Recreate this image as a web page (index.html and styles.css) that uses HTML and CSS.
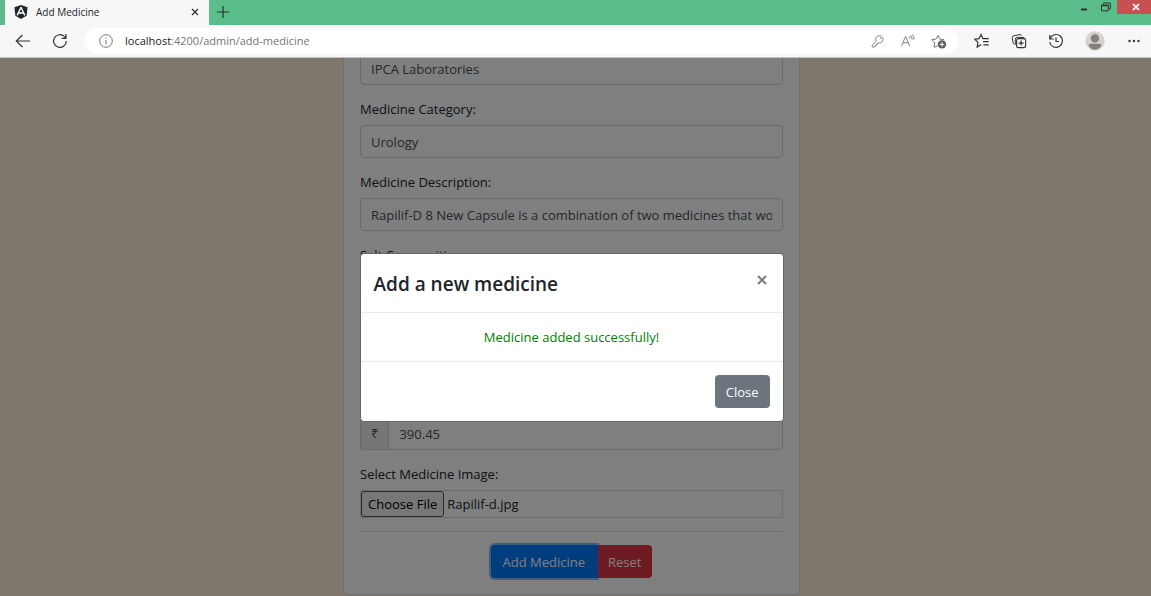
FILE: index.html
```html
<!DOCTYPE html>
<html lang="en">
<head>
<meta charset="utf-8">
<title>Add Medicine</title>
<link rel="stylesheet" href="styles.css">
</head>
<body>
<header class="tabbar">
  <div class="tab">
    <svg class="logo" viewBox="0 0 14 14" width="14" height="14"><path d="M7 0 13.6 2.3 12.6 10.8 7 14 1.4 10.8.4 2.3Z" fill="#20252c"/><path d="M7 2.2 3.2 10.4M7 2.2l3.8 8.2M4.8 8h4.4" fill="none" stroke="#fff" stroke-width="1.4"/></svg>
    <span class="tab-title">Add Medicine</span>
    <button class="icon-button tab-close" aria-label="Close tab"><svg viewBox="0 0 8 8" width="8" height="8"><path d="M1 1l6 6M7 1 1 7" stroke="#333" stroke-width="1.3"/></svg></button>
  </div>
  <button class="icon-button new-tab" aria-label="New tab"><svg viewBox="0 0 12 12" width="12" height="12"><path d="M6 0v12M0 6h12" stroke="#25352c" stroke-width="1.2"/></svg></button>
  <div class="window-buttons">
    <button class="icon-button minimise" aria-label="Minimise"><svg viewBox="0 0 8 10" width="8" height="10"><path d="M1 7.5h6" stroke="#26352d" stroke-width="2"/></svg></button>
    <button class="icon-button restore" aria-label="Restore"><svg viewBox="0 0 10 10" width="10" height="10"><path d="M2.5 2V1h6.8v6H8.4" fill="none" stroke="#26352d"/><path d="M.5 3.5h6.8v5.3H.5Z" fill="none" stroke="#26352d"/><path d="M.2 3.4h7.3" stroke="#26352d" stroke-width="1.6"/></svg></button>
    <button class="icon-button close-window" aria-label="Close window"><svg viewBox="0 0 8 8" width="8" height="8"><path d="M1 1l6 6M7 1 1 7" stroke="#fff" stroke-width="1.7"/></svg></button>
  </div>
</header>
<nav class="toolbar">
  <button class="icon-button" aria-label="Back"><svg viewBox="0 0 16 16" width="16" height="16"><path d="M15 8H1.5M7.5 2 1.3 8l6.2 6" fill="none" stroke="#333" stroke-width="1.2"/></svg></button>
  <button class="icon-button reload" aria-label="Reload"><svg viewBox="0 0 16 16" width="16" height="16"><path d="M14.3 8a6.4 6.4 0 1 1-2-4.6L14 5.2M14 1v4.4H9.7" fill="none" stroke="#333" stroke-width="1.2"/></svg></button>
  <div class="address">
    <svg viewBox="0 0 14 14" width="14" height="14"><circle cx="7" cy="7" r="6.3" fill="none" stroke="#777"/><path d="M7 6v4.5M7 3.4v1.3" stroke="#777" stroke-width="1.1"/></svg>
    <span class="url"><span class="host">localhost</span>:4200/admin/add-medicine</span>
    <button class="icon-button" aria-label="Passwords"><svg viewBox="0 0 14 14" width="14" height="14"><path d="M5.2 7.3A3.7 3.7 0 1 1 7.7 9H6.5v1.3H5.2v1.3H4V13H1.2v-2Z" fill="none" stroke="#858585"/><circle cx="9.7" cy="4.2" r=".8" fill="#858585"/></svg></button>
    <button class="icon-button" aria-label="Read aloud"><svg viewBox="0 0 16 14" width="16" height="14"><path d="M1.5 12 5.6 2.2 9.7 12M2.9 8.7h5.4M9 2.3q1.2 1 .9 2.7M10.7 1.3q1.7 1.7 1.3 4.3M12.4.4q2 2.2 1.5 5.2" fill="none" stroke="#858585"/></svg></button>
    <button class="icon-button" aria-label="Add to favourites"><svg viewBox="0 0 16 16" width="16" height="16"><path d="M6.7 13 3 14.2l.7-4.3L.7 6.7l4.2-.6L7 2.2l1.9 3.9 4.3.6" fill="none" stroke="#777"/><circle cx="11" cy="11.4" r="4.2" fill="#5e5e5e"/><path d="M11 9.2v4.4M8.8 11.4h4.4" stroke="#fff"/></svg></button>
  </div>
  <div class="tools">
    <button class="icon-button" aria-label="Favourites"><svg viewBox="0 0 16 16" width="16" height="16"><path d="M7.3 11.6 3.2 14l.7-4.6L.8 6.2l4.3-.6L7 1.6l1.9 4h5.8M9 8.7h5.7M9.4 11.9h5.3" fill="none" stroke="#333" stroke-width="1.2"/></svg></button>
    <button class="icon-button" aria-label="Collections"><svg viewBox="0 0 16 16" width="16" height="16"><path d="M3.4 11.4Q2.400 11 2.100 9.800L1.200 4.800q-.3-1.600 1.200-1.900l6.400-1.300q1.400-.3 1.900.9M4.300 11.800V6.400q0-2 2-2h5.900q1.200 0 1.500 1" fill="none" stroke="#333"/><rect x="5.600" y="5.600" width="9" height="9" rx="1.700" fill="#f7f7f7" stroke="#333" stroke-width="1.100"/><path d="M10.100 7.600v5M7.600 10.100h5" stroke="#333" stroke-width="1.200"/></svg></button>
    <button class="icon-button" aria-label="History"><svg viewBox="0 0 16 16" width="16" height="16"><path d="M1.8 2v4h4M2 5.7A6.4 6.4 0 1 1 1.7 9M8 4.500v4h3" fill="none" stroke="#333" stroke-width="1.2"/></svg></button>
    <button class="icon-button" aria-label="Profile"><svg viewBox="0 0 20 20" width="20" height="20"><circle cx="10" cy="10" r="9.7" fill="#d5d2cf"/><circle cx="10" cy="7.4" r="4.2" fill="#85807c"/><path d="M3.6 14.5q0-1.8 1.8-1.8h9.2q1.8 0 1.8 1.8Q14.2 18.7 10 18.7T3.6 14.5Z" fill="#85807c"/></svg></button>
    <button class="icon-button menu" aria-label="Menu"><svg viewBox="0 0 12 4" width="12" height="4"><g fill="#333"><circle cx="1.5" cy="2" r="1.2"/><circle cx="6" cy="2" r="1.2"/><circle cx="10.5" cy="2" r="1.2"/></g></svg></button>
  </div>
</nav>
<main class="viewport">
  <form class="card">
    <input class="control" id="maker" aria-label="Manufacturer" value="IPCA Laboratories">
    <label for="category">Medicine Category:</label>
    <input class="control" id="category" value="Urology">
    <label for="description">Medicine Description:</label>
    <input class="control" id="description" value="Rapilif-D 8 New Capsule is a combination of two medicines that wo">
    <label for="salt">Salt Composition:</label>
    <input class="control" id="salt">
    <label for="quantity">Quantity:</label>
    <input class="control" id="quantity">
    <label for="price">Price:</label>
    <div class="input-group"><span class="prefix">₹</span><input class="control" id="price" value="390.45"></div>
    <label for="image">Select Medicine Image:</label>
    <input class="file" id="image" type="file">
    <hr class="rule">
    <div class="actions"><button class="btn primary" type="button">Add Medicine</button><button class="btn danger" type="reset">Reset</button></div>
  </form>
  <div class="backdrop">
    <section class="modal" role="dialog" aria-labelledby="modal-title">
      <div class="modal-header"><h1 id="modal-title">Add a new medicine</h1><button class="icon-button" aria-label="Dismiss"><svg viewBox="0 0 10 10" width="10" height="10"><path d="M1 1l8 8M9 1 1 9" stroke="#7f7f7f" stroke-width="2.2"/></svg></button></div>
      <p class="message">Medicine added successfully!</p>
      <div class="modal-footer"><button class="btn secondary">Close</button></div>
    </section>
  </div>
</main>
<script src="script.js"></script>
</body>
</html>
```
FILE: styles.css
```css
* { box-sizing: border-box; }
body {
  margin: 0;
  height: 100vh;
  display: flex;
  flex-direction: column;
  overflow: hidden;
  font: 13px/20px "Open Sans", "Noto Sans", sans-serif;
  color: #212529;
}
button, input { font: inherit; }
svg { display: block; flex: none; }
.icon-button {
  display: flex;
  align-items: center;
  justify-content: center;
  flex: none;
  border: 0;
  padding: 0;
  background: none;
}
.tabbar {
  display: flex;
  align-items: flex-start;
  height: 25px;
  flex: none;
  padding-left: 5px;
  background: #5bbd8c;
}
.tab {
  display: flex;
  align-items: center;
  width: 204px;
  height: 25px;
  padding: 0 10px 2px 9px;
  background: #f7f7f7;
}
.tab-title { flex: 1; margin-left: 8px; font-size: 10px; }
.new-tab { width: 28px; height: 23px; }
.window-buttons { display: flex; margin-left: auto; }
.minimise, .restore { width: 22px; height: 13px; }
.close-window { width: 34px; height: 14px; padding-left: 4px; background: #c75050; }
.toolbar {
  display: flex;
  align-items: center;
  height: 33px;
  flex: none;
  padding: 0 11px 0 15px;
  border-bottom: 1px solid #c4c4c4;
  background: #f7f7f7;
}
.reload { margin-left: 21px; }
.address {
  display: flex;
  align-items: center;
  flex: 1;
  gap: 15px;
  height: 26px;
  margin-left: 16px;
  padding: 0 11px 0 15px;
  border-radius: 13px;
  background: #fff;
}
.url { flex: 1; margin-left: -3px; font-size: 11px; color: #767676; }
.host { color: #222; }
.tools { display: flex; align-items: center; gap: 21px; margin-left: 16px; }
.menu { margin-left: 2px; }
.viewport {
  position: relative;
  flex: 1;
  display: flex;
  flex-direction: column;
  justify-content: flex-end;
  align-items: center;
  min-height: 0;
  padding: 0 8px 1px 0;
  overflow: hidden;
  background: #feedd9;
}
.card {
  display: flex;
  flex-direction: column;
  flex: none;
  width: 100%;
  max-width: 457px;
  padding: 16px;
  border: 1px solid #dfdfdf;
  border-radius: 4px;
  background: #fff;
}
.card label { margin-bottom: 6px; }
.control {
  width: 100%;
  height: 33px;
  flex: none;
  margin-bottom: 14px;
  padding: 5px 10px;
  border: 1px solid #ced4da;
  border-radius: 4px;
  background: #fff;
  color: #495057;
}
.input-group { display: flex; margin-bottom: 14px; }
.prefix {
  padding: 5px 10px 6px;
  border: 1px solid #ced4da;
  border-right: 0;
  border-radius: 4px 0 0 4px;
  background: #e9ecef;
  color: #495057;
}
.input-group .control { flex: 1; min-width: 0; margin: 0; border-radius: 0 4px 4px 0; }
.file { width: 100%; height: 28px; border: 1px solid #ddd; }
.file::file-selector-button {
  height: 26px;
  margin: 0 3px 0 0;
  padding: 0 6px;
  border: 1px solid #555;
  border-radius: 3px;
  background: #efefef;
  font: inherit;
}
.rule { width: 100%; margin: 13px 0; border: 0; border-top: 1px solid #e0e0e0; }
.actions { display: flex; justify-content: center; }
.btn {
  height: 33px;
  padding: 0 11px;
  border: 0;
  border-radius: 4px;
  color: #fff;
}
.primary {
  position: relative;
  padding: 0 12px;
  border-radius: 4px 0 0 4px;
  background: #007bff;
  box-shadow: 0 0 0 2px rgb(0 123 255 / 50%);
}
.danger { border-radius: 0 4px 4px 0; background: #dc3545; }
.secondary { background: #6c757d; }
.backdrop {
  position: absolute;
  inset: 0;
  display: flex;
  justify-content: center;
  align-items: center;
  padding: 21px 8px 0 0;
  background: rgb(0 0 0 / 50%);
}
.modal {
  width: 100%;
  max-width: 424px;
  border: 1px solid #666;
  border-radius: 4px;
  background: #fff;
}
.modal-header {
  display: flex;
  align-items: flex-start;
  justify-content: space-between;
  padding: 13px 13px 11px;
  border-bottom: 1px solid #e9ecef;
}
.modal-header h1 { margin: 0; font-size: 19px; line-height: 34px; font-weight: 600; }
.modal-header .icon-button { padding: 8px 3px; }
.message { margin: 0; padding: 14px; text-align: center; color: #008000; }
.modal-footer {
  display: flex;
  justify-content: flex-end;
  padding: 13px;
  border-top: 1px solid #e9ecef;
}
```
FILE: script.js
```js
const picker = document.getElementById("image");
const selection = new DataTransfer();
selection.items.add(new File([""], "Rapilif-d.jpg", { type: "image/jpeg" }));
picker.files = selection.files;
```
